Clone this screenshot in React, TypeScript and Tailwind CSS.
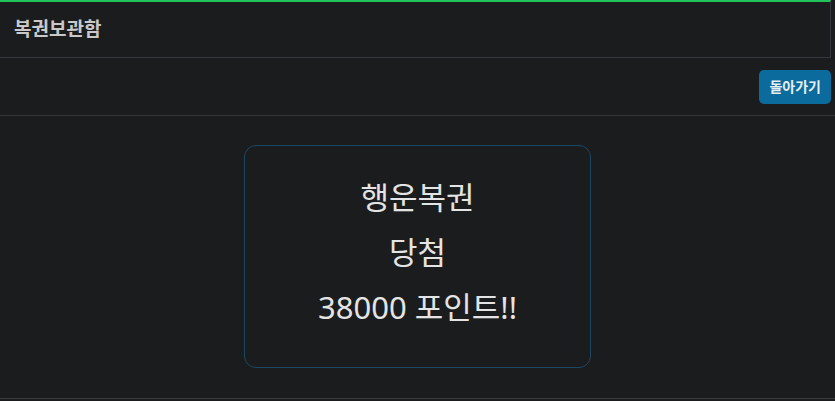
const font = {
  fontFamily: '"Noto Sans", "Noto Sans CJK KR", sans-serif',
};

const LotteryResult = () => {
  return (
    <div className="flex justify-center pt-[29px] pb-[30px] border-b border-[#3a3b3d]">
      <div className="w-[347px] h-[223px] rounded-[12px] border border-[#1c4866] flex flex-col items-center pt-[24px] text-[31px] leading-[55px] text-[#e4e4e4]">
        <span>행운복권</span>
        <span>당첨</span>
        <span>38000 포인트!!</span>
      </div>
    </div>
  );
};

const App = () => {
  return (
    <div className="min-h-[401px] w-full bg-[#1b1c1e]" style={font}>
      <div className="w-[831px] h-[58px] border-t-2 border-t-[#1fc35a] border-r border-b border-[#33363b] flex items-center px-[14px]">
        <span className="text-[19px] font-bold text-[#c9c9c9]">복권보관함</span>
      </div>

      <div className="flex justify-end items-center h-[58px] pr-[4px] border-b border-[#333538]">
        <button className="h-[34px] px-[10px] rounded-[5px] bg-[#0a6b9c] text-[14px] font-bold text-[#e8eef2]">
          돌아가기
        </button>
      </div>

      <LotteryResult />
    </div>
  );
};

export default App;
